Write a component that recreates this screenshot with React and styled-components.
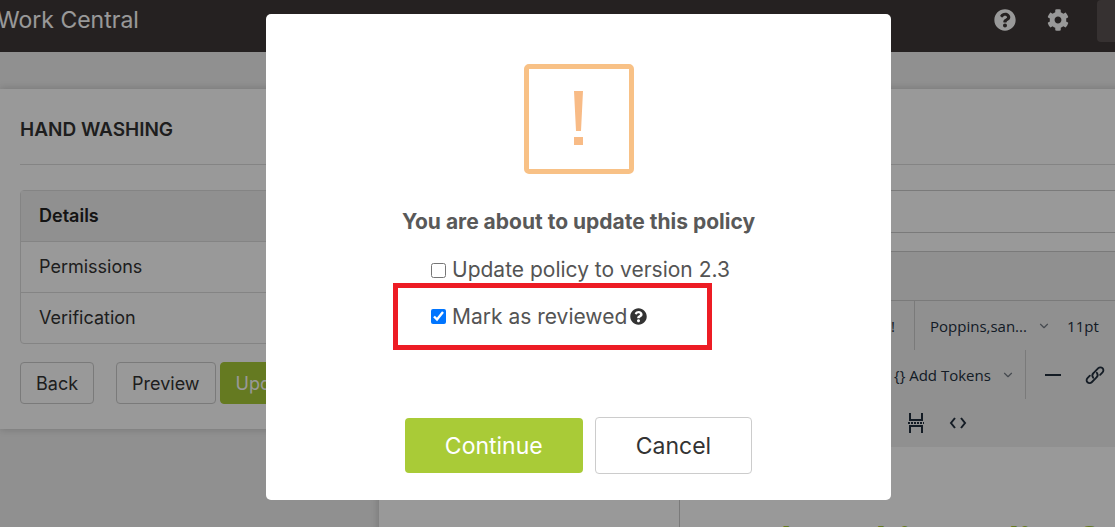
import styled, { createGlobalStyle, css } from "styled-components";
import { FaQuestionCircle, FaCog } from "react-icons/fa";
import { ChevronDown } from "lucide-react";

const GlobalStyle = createGlobalStyle`
  * {
    box-sizing: border-box;
  }
  body {
    margin: 0;
    background-color: #f0f0f0;
    font-family: Inter, "Open Sans", sans-serif;
    font-size: 18px;
    color: #333;
  }
  button, input {
    font-family: inherit;
  }
`;

const Page = styled.div`
  height: 100vh;
  overflow: hidden;
  display: flex;
  flex-direction: column;
`;

const Header = styled.header`
  flex: none;
  height: 52px;
  background-color: #3f3837;
  color: #fff;
  display: flex;
  align-items: flex-start;
  overflow: hidden;
`;

const Brand = styled.div`
  flex: 1;
  margin-left: -3px;
  font-size: 23px;
  line-height: 40px;
  white-space: nowrap;
`;

const IconLink = styled.a`
  display: flex;
  width: 22px;
  margin: 9px 28px 0 3px;
  font-size: 22px;
  color: #fff;
`;

const Account = styled.button`
  width: 18px;
  height: 42px;
  border: none;
  border-radius: 4px 0 0 4px;
  background-color: #5a5352;
`;

const Main = styled.main`
  flex: 1;
  min-height: 0;
  padding-top: 37px;
  display: grid;
  grid-template-columns: 350px 1fr;
  gap: 29px;
  align-items: start;
`;

const Card = styled.section`
  background-color: #fff;
  box-shadow: 0 0 8px rgba(0, 0, 0, 0.2);
  padding: 0 20px 25px;
`;

const Title = styled.h1`
  margin: 0 -20px 25px 0;
  height: 76px;
  border-bottom: 1px solid #ddd;
  font-size: 19px;
  font-weight: 600;
  line-height: 82px;
`;

const Menu = styled.nav`
  border: 1px solid #ddd;
  border-radius: 4px;
  margin-bottom: 18px;
`;

const MenuItem = styled.a`
  display: block;
  padding: 0 18px;
  line-height: 50px;
  color: #333;
  text-decoration: none;
  & + & {
    border-top: 1px solid #ddd;
  }
  ${(props) =>
    props.$active &&
    css`
      background-color: #f0f0f0;
      color: #222;
      font-weight: 600;
    `}
`;

const Actions = styled.div`
  display: flex;
  gap: 4px;
`;

const Button = styled.button`
  height: 42px;
  padding: 0 15px;
  border: 1px solid ${(props) => (props.$primary ? "#a9cb37" : "#ccc")};
  border-radius: 4px;
  background-color: ${(props) => (props.$primary ? "#a9cb37" : "#fff")};
  color: ${(props) => (props.$primary ? "#fff" : "#333")};
  font-size: 18px;
  white-space: nowrap;
  cursor: pointer;
`;

const BackButton = styled(Button)`
  margin-right: 18px;
`;

const ModalButton = styled(Button)`
  height: ${(props) => (props.$primary ? 55 : 57)}px;
  padding: 0 40px;
  border-width: ${(props) => (props.$primary ? 0 : 1)}px;
  font-size: 23px;
`;

const NameInput = styled.input`
  display: block;
  width: 100%;
  height: 43px;
  border: 1px solid #ccc;
  margin-bottom: 18px;
`;

const EditorCard = styled(Card)`
  padding: 0 0 200px;
`;

const Editor = styled.div`
  margin-left: 300px;
  border: 1px solid #ccc;
  border-right: none;
  font-family: "Open Sans", sans-serif;
  color: #222f3e;
`;

const MenuBar = styled.div`
  height: 49px;
  background-color: #f0f0f0;
  border-bottom: 1px solid #ccc;
`;

const Toolbar = styled.div`
  height: 49px;
  padding-left: ${(props) => props.$indent}px;
  background-color: #f0f0f0;
  display: flex;
  align-items: center;
  overflow: hidden;
  &:last-of-type {
    height: 48px;
  }
`;

const ToolGroup = styled.div`
  flex: none;
  height: 49px;
  padding: 0 ${(props) => props.$pad || 0}px;
  display: flex;
  align-items: center;
  & + & {
    border-left: 1px solid #ccc;
  }
`;

const ToolButton = styled.button`
  display: flex;
  align-items: center;
  justify-content: center;
  gap: 10px;
  height: 34px;
  min-width: ${(props) => (props.$text ? 34 : 42)}px;
  padding: 0 ${(props) => props.$pad || 0}px;
  border: none;
  background: none;
  color: #222f3e;
  font-size: 15px;
  white-space: nowrap;
  svg {
    flex: none;
  }
`;

const Chevron = styled(ChevronDown)`
  opacity: 0.6;
`;

const Document = styled.div`
  height: 200px;
  padding: 69px 0 0 16px;
  color: #a9cb37;
  font-size: 36px;
  font-weight: 700;
  line-height: 48px;
  white-space: nowrap;
`;

const Overlay = styled.div`
  position: fixed;
  inset: 0;
  padding: 14px 0 0 42px;
  background-color: rgba(0, 0, 0, 0.4);
  display: flex;
  justify-content: center;
  align-items: flex-start;
`;

const Modal = styled.div`
  width: 625px;
  padding: 50px 20px 26px;
  border-radius: 5px;
  background-color: #fff;
  display: flex;
  flex-direction: column;
  align-items: center;
`;

const Warning = styled.div`
  width: 110px;
  height: 110px;
  border: 5px solid #f8c186;
  border-radius: 5px;
  display: flex;
  align-items: center;
  justify-content: center;
`;

const ModalTitle = styled.h2`
  margin: 32px 0 19px;
  font-size: 21px;
  font-weight: 700;
  line-height: 32px;
  color: #595959;
`;

const Options = styled.div`
  width: 371px;
  padding-right: 52px;
  margin-bottom: 67px;
`;

const Option = styled.div`
  display: flex;
  align-items: center;
  height: ${(props) => (props.$marked ? 67 : 26)}px;
  padding: 0 33px;
  border: 5px solid ${(props) => (props.$marked ? "#ed1c24" : "transparent")};
  border-width: ${(props) => (props.$marked ? 5 : 0)}px 5px;
`;

const Checkbox = styled.input`
  flex: none;
  width: 15px;
  height: 15px;
  margin: 0 6px 0 0;
`;

const Label = styled.label`
  font-size: 21px;
  line-height: 26px;
  color: #545454;
  white-space: nowrap;
`;

const Help = styled(FaQuestionCircle)`
  flex: none;
  margin-left: 3px;
  font-size: 17px;
  color: #333;
`;

const ModalButtons = styled.div`
  display: flex;
  align-items: center;
  gap: 12px;
`;

const LinkIcon = () => (
  <svg width="22" height="22" viewBox="0 0 24 24" fill="none" stroke="currentColor" strokeWidth="2" strokeLinecap="round">
    <path d="M10 15a4 4 0 0 1 .6-5.400l5-5a3.200 3.200 0 0 1 4.600 4.600l-2.600 2.600" />
    <path d="M14 9.500a4 4 0 0 1-.6 5.400l-5 5a3.200 3.200 0 0 1-4.600-4.600l2.600-2.600" />
  </svg>
);

const PageBreakIcon = () => (
  <svg width="16" height="20" viewBox="0 0 16 20" fill="none" stroke="currentColor" strokeWidth="2">
    <path d="M2 0v7h12V0M2 20v-7h12v7" />
    <path d="M0 10h16" strokeDasharray="2 1" />
  </svg>
);

const CodeIcon = () => (
  <svg width="18" height="12" viewBox="0 0 18 12" fill="none" stroke="currentColor" strokeWidth="2">
    <path d="M6 1L2 6l4 5M12 1l4 5-4 5" />
  </svg>
);

const App = () => {
  return (
    <>
      <GlobalStyle />
      <Page>
        <Header>
          <Brand>Work Central</Brand>
          <IconLink href="#help" aria-label="Help">
            <FaQuestionCircle />
          </IconLink>
          <IconLink href="#settings" aria-label="Settings">
            <FaCog />
          </IconLink>
          <Account aria-label="Account" />
        </Header>
        <Main>
          <Card>
            <Title>HAND WASHING</Title>
            <Menu>
              <MenuItem href="#details" $active>Details</MenuItem>
              <MenuItem href="#permissions">Permissions</MenuItem>
              <MenuItem href="#verification">Verification</MenuItem>
            </Menu>
            <Actions>
              <BackButton>Back</BackButton>
              <Button>Preview</Button>
              <Button $primary>Update</Button>
            </Actions>
          </Card>
          <EditorCard>
            <Title as="div" />
            <NameInput aria-label="Policy name" />
            <Editor>
              <MenuBar />
              <div>
                <Toolbar $indent={192}>
                  <ToolGroup>
                    <ToolButton $pad={4}>!</ToolButton>
                  </ToolGroup>
                  <ToolGroup>
                    <ToolButton $pad={15}>
                      Poppins,san... <Chevron size={14} />
                    </ToolButton>
                    <ToolButton $text>11pt</ToolButton>
                  </ToolGroup>
                </Toolbar>
                <Toolbar $indent={204}>
                  <ToolGroup>
                    <ToolButton $pad={10}>
                      {"{} Add Tokens"} <Chevron size={14} />
                    </ToolButton>
                  </ToolGroup>
                  <ToolGroup $pad={6}>
                    <ToolButton aria-label="Horizontal line">
                      <svg width="16" height="2"><path d="M0 1h16" stroke="currentColor" strokeWidth="2" /></svg>
                    </ToolButton>
                    <ToolButton aria-label="Link"><LinkIcon /></ToolButton>
                  </ToolGroup>
                </Toolbar>
                <Toolbar $indent={215}>
                  <ToolButton aria-label="Page break"><PageBreakIcon /></ToolButton>
                  <ToolButton aria-label="Source code"><CodeIcon /></ToolButton>
                </Toolbar>
              </div>
              <Document>Hand Washing Policy for</Document>
            </Editor>
          </EditorCard>
        </Main>
      </Page>
      <Overlay>
        <Modal role="dialog" aria-labelledby="modal-title">
          <Warning>
            <svg width="10" height="56" viewBox="0 0 10 56" fill="#f8bb86">
              <path d="M0 0h9L7 40H2zM0 46h9v8H0z" />
            </svg>
          </Warning>
          <ModalTitle id="modal-title">You are about to update this policy</ModalTitle>
          <Options>
            <Option>
              <Checkbox type="checkbox" id="version" />
              <Label htmlFor="version">Update policy to version 2.3</Label>
            </Option>
            <Option $marked>
              <Checkbox type="checkbox" id="reviewed" defaultChecked />
              <Label htmlFor="reviewed">Mark as reviewed</Label>
              <Help />
            </Option>
          </Options>
          <ModalButtons>
            <ModalButton $primary>Continue</ModalButton>
            <ModalButton>Cancel</ModalButton>
          </ModalButtons>
        </Modal>
      </Overlay>
    </>
  );
};

export default App;
